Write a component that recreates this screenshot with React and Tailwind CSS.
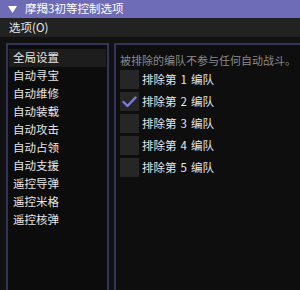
import React from 'react';

const items = ['全局设置', '自动寻宝', '自动维修', '自动装载', '自动攻击', '自动占领', '自动支援', '遥控导弹', '遥控米格', '遥控核弹'];
const squads = [1, 2, 3, 4, 5];

const App = () => {
  return (
    <div
      className="w-[300px] h-[290px] overflow-hidden bg-[#111111] flex flex-col text-[11.5px] leading-none text-[#e6e6e6]"
      style={{ fontFamily: '"Noto Sans CJK SC", "Noto Sans", sans-serif' }}
    >
      <div className="h-[18px] bg-[#6e6cb6] flex items-center pl-[8px] shrink-0">
        <svg width="9" height="7" viewBox="0 0 9 7" className="mr-[8px]">
          <polygon points="0,0 9,0 4.5,7" fill="#ffffff" />
        </svg>
        <span className="text-white">摩羯3初等控制选项</span>
      </div>
      <div className="h-[19px] bg-[#222222] flex items-center pl-[9px] shrink-0">
        <span className="text-[#e8e8e8]">选项(O)</span>
      </div>
      <div className="flex-1 flex pt-[6px] pl-[6px] gap-[5px] min-h-0">
        <div className="w-[103px] shrink-0 border-2 border-b-0 border-[#34335c] bg-[#0c0c0c] pt-[4px] px-[1px] flex flex-col">
          {items.map((t, i) => (
            <div
              key={t}
              className={`h-[18px] flex items-center pl-[4px] ${i === 0 ? 'bg-[#1d1d1d]' : ''}`}
            >
              {t}
            </div>
          ))}
        </div>
        <div className="flex-1 min-w-0 border-2 border-r-0 border-b-0 border-[#34335c] bg-[#0e0e0e] pl-[4px] pt-[8px] flex flex-col">
          <div className="text-[#8a8a8a] text-[11px] whitespace-nowrap h-[14px] flex items-center">被排除的编队不参与任何自动战斗。</div>
          <div className="flex flex-col gap-[3px] mt-[3px]">
            {squads.map((n) => (
              <div key={n} className="flex items-center gap-[3px] h-[19px]">
                <div className="w-[19px] h-[19px] shrink-0 bg-[#262626] flex items-center justify-center">
                  {n === 2 && (
                    <svg width="15" height="12" viewBox="0 0 15 12">
                      <polyline points="1.5,6 5.5,10 13.5,1.5" fill="none" stroke="#7d7ae6" strokeWidth="2.4" strokeLinecap="round" strokeLinejoin="round" />
                    </svg>
                  )}
                </div>
                <span className="whitespace-nowrap">
                  排除第<span className="px-[4px]">{n}</span>编队
                </span>
              </div>
            ))}
          </div>
        </div>
      </div>
    </div>
  );
};

export default App;
